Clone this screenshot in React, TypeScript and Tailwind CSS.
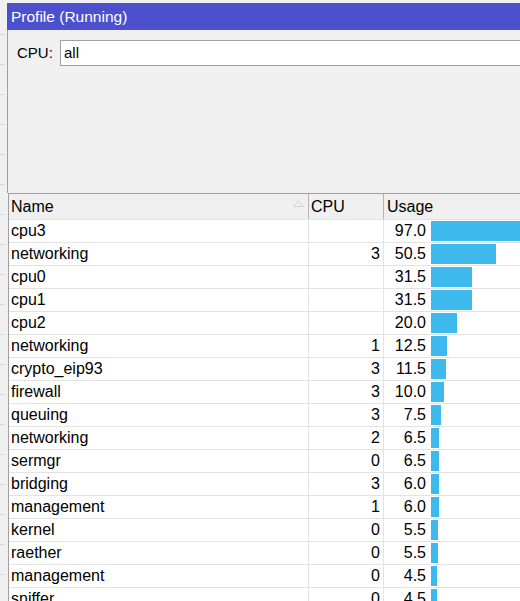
const rows: [string, string, number][] = [
  ["cpu3", "", 97.0],
  ["networking", "3", 50.5],
  ["cpu0", "", 31.5],
  ["cpu1", "", 31.5],
  ["cpu2", "", 20.0],
  ["networking", "1", 12.5],
  ["crypto_eip93", "3", 11.5],
  ["firewall", "3", 10.0],
  ["queuing", "3", 7.5],
  ["networking", "2", 6.5],
  ["sermgr", "0", 6.5],
  ["bridging", "3", 6.0],
  ["management", "1", 6.0],
  ["kernel", "0", 5.5],
  ["raether", "0", 5.5],
  ["management", "0", 4.5],
  ["sniffer", "0", 4.5],
];

const ticks = Array.from({ length: 20 });

export default function App() {
  return (
    <div
      className="w-[520px] h-[601px] overflow-hidden bg-[#f0f0f0] flex text-black"
      style={{ fontFamily: '"Liberation Sans", Arial, sans-serif' }}
    >
      {/* background window peeking on the left */}
      <div className="w-[7px] shrink-0 pt-[5px] flex flex-col">
        {ticks.map((_, i) => (
          <div key={i} className="h-[30px] shrink-0 border-b border-[#d9d9d9] w-[5px]" />
        ))}
      </div>

      <div className="flex-1 min-w-0 flex flex-col pt-[3px]">
        <div className="h-[27px] shrink-0 bg-[#4d50cc] text-white text-[15.5px] leading-[27px] pl-[4px] whitespace-nowrap">
          Profile (Running)
        </div>

        <div className="h-[163px] shrink-0 border-l border-[#a0a0a0] flex items-start pt-[10px] pl-[9px]">
          <span className="text-[15px] leading-[26px] w-[43px]">CPU:</span>
          <div className="flex-1 h-[26px] bg-white border border-r-0 border-[#a0a0a0] text-[15px] leading-[24px] pl-[3px]">
            all
          </div>
        </div>

        <div className="flex-1 min-h-0 overflow-hidden ml-[1px] border-l border-t border-[#a0a0a0] bg-white text-[16px]">
          {/* header */}
          <div className="flex h-[26px] bg-[#f0f0f0] border-b border-[#e3e3e3]">
            <div className="w-[300px] shrink-0 border-r border-[#b4b4b4] pl-[2px] leading-[25px] relative">
              Name
              <svg className="absolute left-[284px] top-[6px]" width="11" height="7" viewBox="0 0 11 7">
                <path d="M0.5 6.5 L5.5 0.8 L10.5 6.5 Z" fill="none" stroke="#d0d0d0" strokeWidth="1" />
              </svg>
            </div>
            <div className="w-[75px] shrink-0 border-r border-[#b4b4b4] pl-[2px] leading-[25px]">CPU</div>
            <div className="flex-1 pl-[3px] leading-[25px]">Usage</div>
          </div>

          {rows.map(([name, cpu, usage], i) => (
            <div key={i} className="flex h-[23px] border-b border-[#e3e3e3]">
              <div className="w-[300px] shrink-0 border-r border-[#e3e3e3] pl-[2px] leading-[22px] whitespace-nowrap">
                {name}
              </div>
              <div className="w-[75px] shrink-0 border-r border-[#e3e3e3] pr-[3px] text-right leading-[22px]">
                {cpu}
              </div>
              <div className="flex-1 flex items-start whitespace-nowrap">
                <div className="w-[42px] shrink-0 text-right leading-[22px]">{usage.toFixed(1)}</div>
                <div
                  className="ml-[5px] mt-[1px] h-[20px] bg-[#3db9ee] shrink-0"
                  style={{ width: Math.round(usage * 1.29) }}
                />
              </div>
            </div>
          ))}
        </div>
      </div>
    </div>
  );
}
